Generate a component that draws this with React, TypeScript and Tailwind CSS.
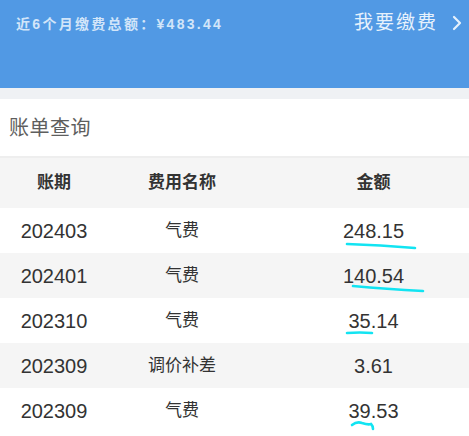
import React from "react";

const rows = [
  { p: "202403", n: "气费", a: "248.15", bg: "bg-white" },
  { p: "202401", n: "气费", a: "140.54", bg: "bg-[#f5f5f5]" },
  { p: "202310", n: "气费", a: "35.14", bg: "bg-white" },
  { p: "202309", n: "调价补差", a: "3.61", bg: "bg-[#f5f5f5]" },
  { p: "202309", n: "气费", a: "39.53", bg: "bg-white" },
];

const font = { fontFamily: '"Liberation Sans", "Noto Sans CJK SC", sans-serif' };

export default function App() {
  return (
    <div className="relative w-[469px] h-[436px] overflow-hidden bg-white" style={font}>
      <div className="h-[88px] bg-[#5199e4] flex items-start justify-between pl-[16px] pr-[7px] pt-[12px]">
        <div className="text-[14px] font-semibold tracking-[2.3px] text-[#d2e5f9] leading-[22px] mt-[1px]">
          近6个月缴费总额：¥483.44
        </div>
        <div className="flex items-center gap-[14px] text-[#e6f1fc] leading-[22px]">
          <span className="text-[19px] tracking-[2px]">我要缴费</span>
          <svg width="10" height="16" viewBox="0 0 10 16" fill="none">
            <path d="M2 2 L8 8 L2 14" stroke="#e6f1fc" strokeWidth="2.2" strokeLinecap="round" strokeLinejoin="round" />
          </svg>
        </div>
      </div>
      <div className="h-[11px] bg-[#eff1f4]" />
      <div className="h-[59px] bg-white flex items-center pl-[9px] border-b-2 border-[#eeeeee]">
        <span className="text-[20px] tracking-[0.5px] text-[#5e5e5e]">账单查询</span>
      </div>
      <div className="grid grid-cols-[108px_148px_1fr] h-[50px] items-center bg-[#f5f5f5] text-[17px] font-bold text-[#333]">
        <div className="text-center">账期</div>
        <div className="text-center">费用名称</div>
        <div className="text-center pl-[22px]">金额</div>
      </div>
      {rows.map((r, i) => (
        <div key={i} className={`grid grid-cols-[108px_148px_1fr] h-[45px] items-center ${r.bg} text-[#333]`}>
          <div className="text-center text-[20px]">{r.p}</div>
          <div className="text-center text-[17px]">{r.n}</div>
          <div className="text-center text-[20px] pl-[22px]">{r.a}</div>
        </div>
      ))}
      <svg className="absolute left-0 top-0 pointer-events-none" width="469" height="436" viewBox="0 0 469 436" fill="none">
        <g stroke="#12e4f2" strokeWidth="2.6" strokeLinecap="round" fill="none">
          <path d="M347 244 Q380 245 415 248" />
          <path d="M353 286 Q386 289 423 291" />
          <path d="M347 333 Q360 332 372 333" />
          <path d="M352 425 Q357 421 362 423 Q368 425 371 424 Q373 426 373 429" />
        </g>
      </svg>
    </div>
  );
}
